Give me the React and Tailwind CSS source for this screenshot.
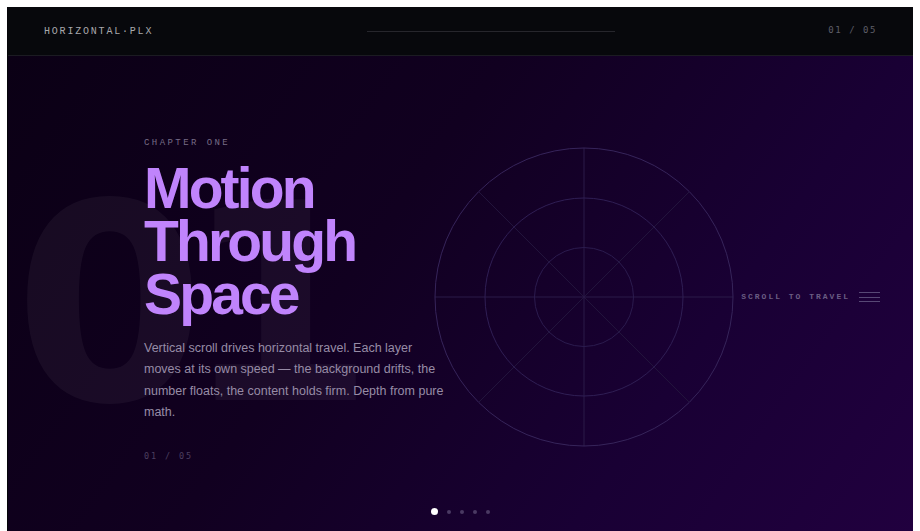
import React from 'react';

const mono = { fontFamily: '"Liberation Mono", "Courier New", monospace' };
const sansMono = { fontFamily: '"DejaVu Sans Mono", monospace' };

const Rings = () => (
    <svg width="300" height="300" viewBox="0 0 300 300" fill="none">
        {/* diagonals */}
        <line x1="45" y1="45" x2="255" y2="255" stroke="#22143c" strokeWidth="1" />
        <line x1="255" y1="45" x2="45" y2="255" stroke="#22143c" strokeWidth="1" />
        {/* cross */}
        <line x1="1" y1="150" x2="299" y2="150" stroke="#2a1a48" strokeWidth="1" />
        <line x1="150" y1="1" x2="150" y2="299" stroke="#2a1a48" strokeWidth="1" />
        <circle cx="150" cy="150" r="149" stroke="#36245a" strokeWidth="1" />
        <circle cx="150" cy="150" r="99" stroke="#2f1e54" strokeWidth="1" />
        <circle cx="150" cy="150" r="49.5" stroke="#2b1b4e" strokeWidth="1" />
    </svg>
);

const App = () => {
    const dots = [0, 1, 2, 3, 4];

    return (
        <div className="bg-white pt-[7px] px-[7px] min-h-screen">
            <div className="h-[531px] flex flex-col overflow-hidden border-l border-[#050509]">
                {/* Header */}
                <header className="h-[49px] shrink-0 bg-[#07080c] border-b border-[#1b1b22] flex items-center justify-between px-[36px]">
                    <span className="text-[10px] tracking-[0.18em] text-[#a9a9ad]" style={mono}>HORIZONTAL·PLX</span>
                    <div className="w-[248px] h-px bg-[#26262c]"></div>
                    <span className="text-[9px] tracking-[0.17em] text-[#5e5e68]" style={sansMono}>01 / 05</span>
                </header>

                {/* Stage */}
                <main className="relative flex-1 flex items-center pl-[136px] bg-[linear-gradient(125deg,#0b0015_0%,#110020_40%,#190034_72%,#21003f_100%)]">
                    {/* background number */}
                    <div
                        className="absolute left-[6px] top-[112px] text-[275px] leading-none font-bold tracking-[-0.08em] text-[#ffffff] opacity-[0.045] select-none"
                        style={{ fontFamily: '"DejaVu Sans", sans-serif' }}
                    >
                        01
                    </div>

                    {/* rings */}
                    <div className="absolute left-[426px] top-1/2 -translate-y-1/2">
                        <Rings />
                    </div>

                    {/* content */}
                    <div className="relative w-[305px] pt-[4px]">
                        <p className="text-[9px] leading-[12px] tracking-[0.27em] text-[#776c86] mb-[13px]" style={mono}>CHAPTER ONE</p>
                        <h1
                            className="text-[57px] leading-[53px] font-bold tracking-[-0.05em] text-[#c084fc]"
                            style={{ fontFamily: '"Liberation Sans", Arial, sans-serif' }}
                        >
                            Motion<br />Through<br />Space
                        </h1>
                        <p
                            className="mt-[17px] text-[12.5px] leading-[21.5px] text-[#978ca6]"
                            style={{ fontFamily: '"Liberation Sans", Arial, sans-serif' }}
                        >
                            Vertical scroll drives horizontal travel. Each layer moves at its own speed — the background drifts, the number floats, the content holds firm. Depth from pure math.
                        </p>
                        <p className="mt-[26px] text-[8.5px] leading-[12px] tracking-[0.22em] text-[#4b3f5f]" style={sansMono}>01 / 05</p>
                    </div>

                    {/* scroll hint */}
                    <div className="absolute right-[33px] top-1/2 -translate-y-1/2 flex items-center gap-[9px]">
                        <span className="text-[8px] font-bold tracking-[0.25em] text-[#6a5d83]" style={mono}>SCROLL TO TRAVEL</span>
                        <div className="flex flex-col gap-[3.5px]">
                            <div className="w-[21px] h-px bg-[#574875]"></div>
                            <div className="w-[21px] h-px bg-[#574875]"></div>
                            <div className="w-[21px] h-px bg-[#574875]"></div>
                        </div>
                    </div>

                    {/* dots */}
                    <div className="absolute bottom-[23px] left-0 right-0 flex items-center justify-center gap-[9px]">
                        {dots.map((d) => (
                            <div
                                key={d}
                                className={d === 0 ? 'w-[7px] h-[7px] rounded-full bg-white' : 'w-[4px] h-[4px] rounded-full bg-[#4a3962]'}
                            ></div>
                        ))}
                    </div>
                </main>
            </div>
        </div>
    );
};

export default App;
